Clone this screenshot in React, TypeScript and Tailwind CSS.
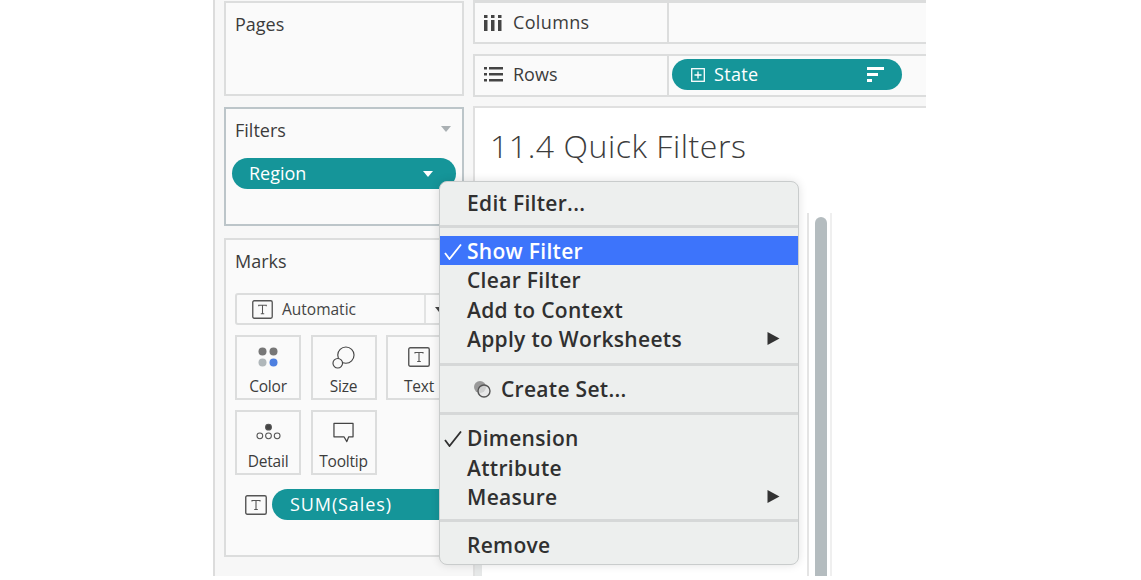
import React from "react";

const TBox = ({ className = "" }: { className?: string }) => (
  <svg viewBox="0 0 22 20" className={className} fill="none">
    <rect x="0.75" y="0.75" width="20.5" height="18.5" rx="1.5" stroke="#555" strokeWidth="1.4" />
    <path d="M7 6.5V5.5H15V6.5M11 5.5V14.5M9.2 14.5H12.8" stroke="#555" strokeWidth="1.1" />
  </svg>
);

const Tile = ({ label, children }: { label: string; children: React.ReactNode }) => (
  <div className="w-[66px] h-[65px] shrink-0 border-2 border-[#dcdddd] flex flex-col items-center">
    <div className="h-[37px] flex items-center justify-center pt-[3px]">{children}</div>
    <span className="text-[15.5px] leading-[20px] tracking-[-0.2px] text-[#3c3c3c] mt-[2px]">{label}</span>
  </div>
);

const Item = ({ label, check, arrow, active }: { label: string; check?: boolean; arrow?: boolean; active?: boolean }) => (
  <div className={`h-[29.5px] flex items-center relative pl-[27px] pr-[18px] ${active ? "bg-[#3d74fb] text-white" : "text-[#303030]"}`}>
    {check && (
      <svg viewBox="0 0 18 16" className="absolute left-[4px] top-[8px] w-[18px] h-[16px]" fill="none">
        <path d="M1 9L5.5 15L17 0.5" stroke={active ? "#fff" : "#303030"} strokeWidth="1.8" />
      </svg>
    )}
    <span className="flex-1 relative top-[1px]">{label}</span>
    {arrow && (
      <svg viewBox="0 0 13 13" className="w-[13px] h-[13px]">
        <path d="M0.5 0L12.5 6.5L0.5 13Z" fill="#333" />
      </svg>
    )}
  </div>
);

const Sep = ({ className }: { className: string }) => (
  <div className={`flex items-center ${className}`}>
    <div className="w-full h-[3px] bg-[#d6d8d8]" />
  </div>
);

export default function App() {
  return (
    <div className="w-[1141px] h-[580px] overflow-hidden bg-white relative font-['Open_Sans',sans-serif]">
      <div className="ml-[213px] w-[713px] h-[576px] border-l-2 border-[#dcdcdc] bg-[#f7f7f7] flex pl-[9px] gap-[9px]">
        <div className="w-[240px] shrink-0 flex flex-col pt-px">
          <div className="h-[95px] border-2 border-[#dcdddd] bg-[#fafafa] pl-[9px] pt-[9px]">
            <div className="text-[18px] leading-[24px] text-[#3c3c3c]">Pages</div>
          </div>
          <div className="h-[119px] mt-[11px] border-2 border-[#bcc5c9] bg-[#fafafa] px-[6px] pt-[9px] relative">
            <div className="text-[18px] leading-[24px] text-[#3c3c3c] pl-[3px]">Filters</div>
            <svg viewBox="0 0 10 6" className="absolute right-[11px] top-[17px] w-[10px] h-[6px]">
              <path d="M0 0H10L5 6Z" fill="#aab0b3" />
            </svg>
            <div className="mt-[16px] h-[31px] rounded-full bg-[#159599] text-white text-[18px] flex items-center pl-[17px] pr-[23px] justify-between">
              <span>Region</span>
              <svg viewBox="0 0 10 6" className="w-[10px] h-[6px]">
                <path d="M0 0H10L5 6Z" fill="#fff" />
              </svg>
            </div>
          </div>
          <div className="h-[319px] mt-[12px] border-2 border-[#dcdddd] bg-[#fafafa] px-[9px] pt-[9px]">
            <div className="text-[18px] leading-[24px] text-[#3c3c3c]">Marks</div>
            <div className="mt-[20px] h-[32px] border-2 border-[#dcdddd] rounded-[3px] flex items-center pl-[15px]">
              <TBox className="w-[21px] h-[19px]" />
              <span className="ml-[9px] mt-[1px] text-[15.5px] text-[#444]">Automatic</span>
              <div className="ml-auto w-[27px] self-stretch border-l-2 border-[#e2e3e3] flex items-center justify-center shrink-0">
                <svg viewBox="0 0 8 5" className="w-[8px] h-[5px]">
                  <path d="M0 0H8L4 5Z" fill="#444" />
                </svg>
              </div>
            </div>
            <div className="mt-[10px] flex gap-[9.5px]">
              <Tile label="Color">
                <svg viewBox="0 0 20 20" className="w-[20px] h-[20px]">
                  <circle cx="4.5" cy="4.5" r="4" fill="#777" />
                  <circle cx="15.5" cy="4.5" r="4" fill="#777" />
                  <circle cx="4.5" cy="15.5" r="4" fill="#b0b7ba" />
                  <circle cx="15.5" cy="15.5" r="4" fill="#4d7fe0" />
                </svg>
              </Tile>
              <Tile label="Size">
                <svg viewBox="0 0 24 24" className="w-[23px] h-[23px]" fill="none" stroke="#444" strokeWidth="1.2">
                  <circle cx="14.5" cy="9.5" r="8.5" />
                  <circle cx="6" cy="18" r="5" fill="#fafafa" />
                </svg>
              </Tile>
              <Tile label="Text">
                <TBox className="w-[22px] h-[20px]" />
              </Tile>
            </div>
            <div className="mt-[10px] flex gap-[9.5px]">
              <Tile label="Detail">
                <svg viewBox="0 0 26 20" className="w-[25px] h-[20px]" fill="none" stroke="#555" strokeWidth="1.1">
                  <circle cx="13" cy="5" r="3" fill="#444" />
                  <circle cx="4" cy="14" r="3" />
                  <circle cx="13" cy="14" r="3" />
                  <circle cx="22" cy="14" r="3" />
                </svg>
              </Tile>
              <Tile label="Tooltip">
                <svg viewBox="0 0 24 22" className="w-[23px] h-[21px]" fill="none" stroke="#444" strokeWidth="1.3" strokeLinejoin="round">
                  <path d="M2 1.5H22V15.5H17.5L15.5 20.5L12.5 15.5H2Z" />
                </svg>
              </Tile>
            </div>
            <div className="mt-[14px] flex items-center pl-[10px]">
              <TBox className="w-[22px] h-[20px]" />
              <div className="ml-[5px] h-[31px] flex-1 -mr-[8px] rounded-l-full bg-[#159599] text-white text-[18px] tracking-[0.9px] flex items-center pl-[18px]">
                SUM(Sales)
              </div>
            </div>
          </div>
        </div>
        <div className="flex-1 flex flex-col min-w-0 min-h-0 overflow-hidden">
          <div className="h-[44px] shrink-0 border-2 border-t-[3px] border-r-0 border-[#dcdddd] bg-[#fafafa] flex items-center">
            <div className="w-[194px] h-full border-r-2 border-[#dcdddd] flex items-center pl-[9px] shrink-0">
              <svg viewBox="0 0 18 16" className="w-[18px] h-[16px] mr-[11px]" fill="#444">
                <rect x="0" y="0" width="3.5" height="3" />
                <rect x="7" y="0" width="3.5" height="3" />
                <rect x="14" y="0" width="3.5" height="3" />
                <rect x="0" y="5" width="3.5" height="11" />
                <rect x="7" y="5" width="3.5" height="11" />
                <rect x="14" y="5" width="3.5" height="11" />
              </svg>
              <span className="text-[18px] tracking-[0.35px] text-[#3c3c3c]">Columns</span>
            </div>
          </div>
          <div className="h-[43px] shrink-0 mt-[10px] border-2 border-r-0 border-[#dcdddd] bg-[#fafafa] flex items-center">
            <div className="w-[194px] h-full border-r-2 border-[#dcdddd] flex items-center pl-[9px] shrink-0">
              <svg viewBox="0 0 19 15" className="w-[19px] h-[15px] mr-[10px] mb-[2px]" fill="#444">
                <rect x="0" y="0" width="3" height="2.5" />
                <rect x="5" y="0" width="14" height="2.5" />
                <rect x="0" y="6" width="3" height="2.5" />
                <rect x="5" y="6" width="14" height="2.5" />
                <rect x="0" y="12" width="3" height="2.5" />
                <rect x="5" y="12" width="14" height="2.5" />
              </svg>
              <span className="text-[18px] text-[#3c3c3c] mb-[2px]">Rows</span>
            </div>
            <div className="ml-[3px] mb-[2px] w-[230px] h-[31px] rounded-full bg-[#159599] text-white flex items-center pl-[19px]">
              <svg viewBox="0 0 14 14" className="w-[14px] h-[14px]" fill="none" stroke="#fff" strokeWidth="1.3">
                <rect x="0.7" y="0.7" width="12.6" height="12.6" />
                <path d="M7 3.5V10.5M3.5 7H10.5" />
              </svg>
              <span className="ml-[9px] text-[18px] tracking-[0.3px]">State</span>
              <svg viewBox="0 0 17 16" className="ml-auto mr-[18px] w-[17px] h-[16px]" fill="#fff">
                <rect x="0" y="0" width="17" height="3" />
                <rect x="0" y="6" width="11" height="3" />
                <rect x="0" y="12" width="5" height="3" />
              </svg>
            </div>
          </div>
          <div className="flex-1 min-h-0 mt-[9px] border-t-2 border-l-2 border-[#e0e0e0] bg-white pt-[16px] flex flex-col overflow-hidden">
            <div className="shrink-0 pl-[15px] text-[32px] leading-[44px] font-light text-[#3c3c3c] tracking-[0.55px]">11.4 Quick Filters</div>
            <div className="flex-1 min-h-0 mt-[21px] flex">
              <div className="w-[7px] bg-[#e6e8e8]" />
              <div className="w-[327px] shrink-0 mt-[24px] border-r-2 border-[#e4e4e4] bg-white" />
              <div className="ml-[6px] pt-[28px]">
                <div className="w-[12px] h-full rounded-t-full bg-[#b4bcbf]" />
              </div>
              <div className="ml-[3px] mt-[24px] w-[2px] bg-[#efefef]" />
            </div>
          </div>
        </div>
      </div>
      <div className="absolute left-[439px] top-[181px] w-[360px] h-[384px] rounded-[8px] bg-[#edefee] border border-[#c9cccc] shadow-[0_0_10px_rgba(0,0,0,0.12)] py-[6px] text-[21px] font-[550] tracking-[0.3px] overflow-hidden">
        <Item label="Edit Filter..." />
        <Sep className="h-[18px]" />
        <Item label="Show Filter" check active />
        <Item label="Clear Filter" />
        <Item label="Add to Context" />
        <Item label="Apply to Worksheets" arrow />
        <Sep className="h-[21px]" />
        <div className="h-[29.5px] flex items-center pl-[33px] text-[#303030]">
          <svg viewBox="0 0 18 18" className="w-[18px] h-[18px] mr-[10px]" fill="none">
            <circle cx="7" cy="7" r="6" fill="#999" />
            <circle cx="11" cy="11" r="6" stroke="#555" strokeWidth="1.4" fill="#e4e6e6" fillOpacity="0.7" />
          </svg>
          <span>Create Set...</span>
        </div>
        <Sep className="h-[19px]" />
        <Item label="Dimension" check />
        <Item label="Attribute" />
        <Item label="Measure" arrow />
        <Sep className="h-[18px]" />
        <Item label="Remove" />
      </div>
    </div>
  );
}
